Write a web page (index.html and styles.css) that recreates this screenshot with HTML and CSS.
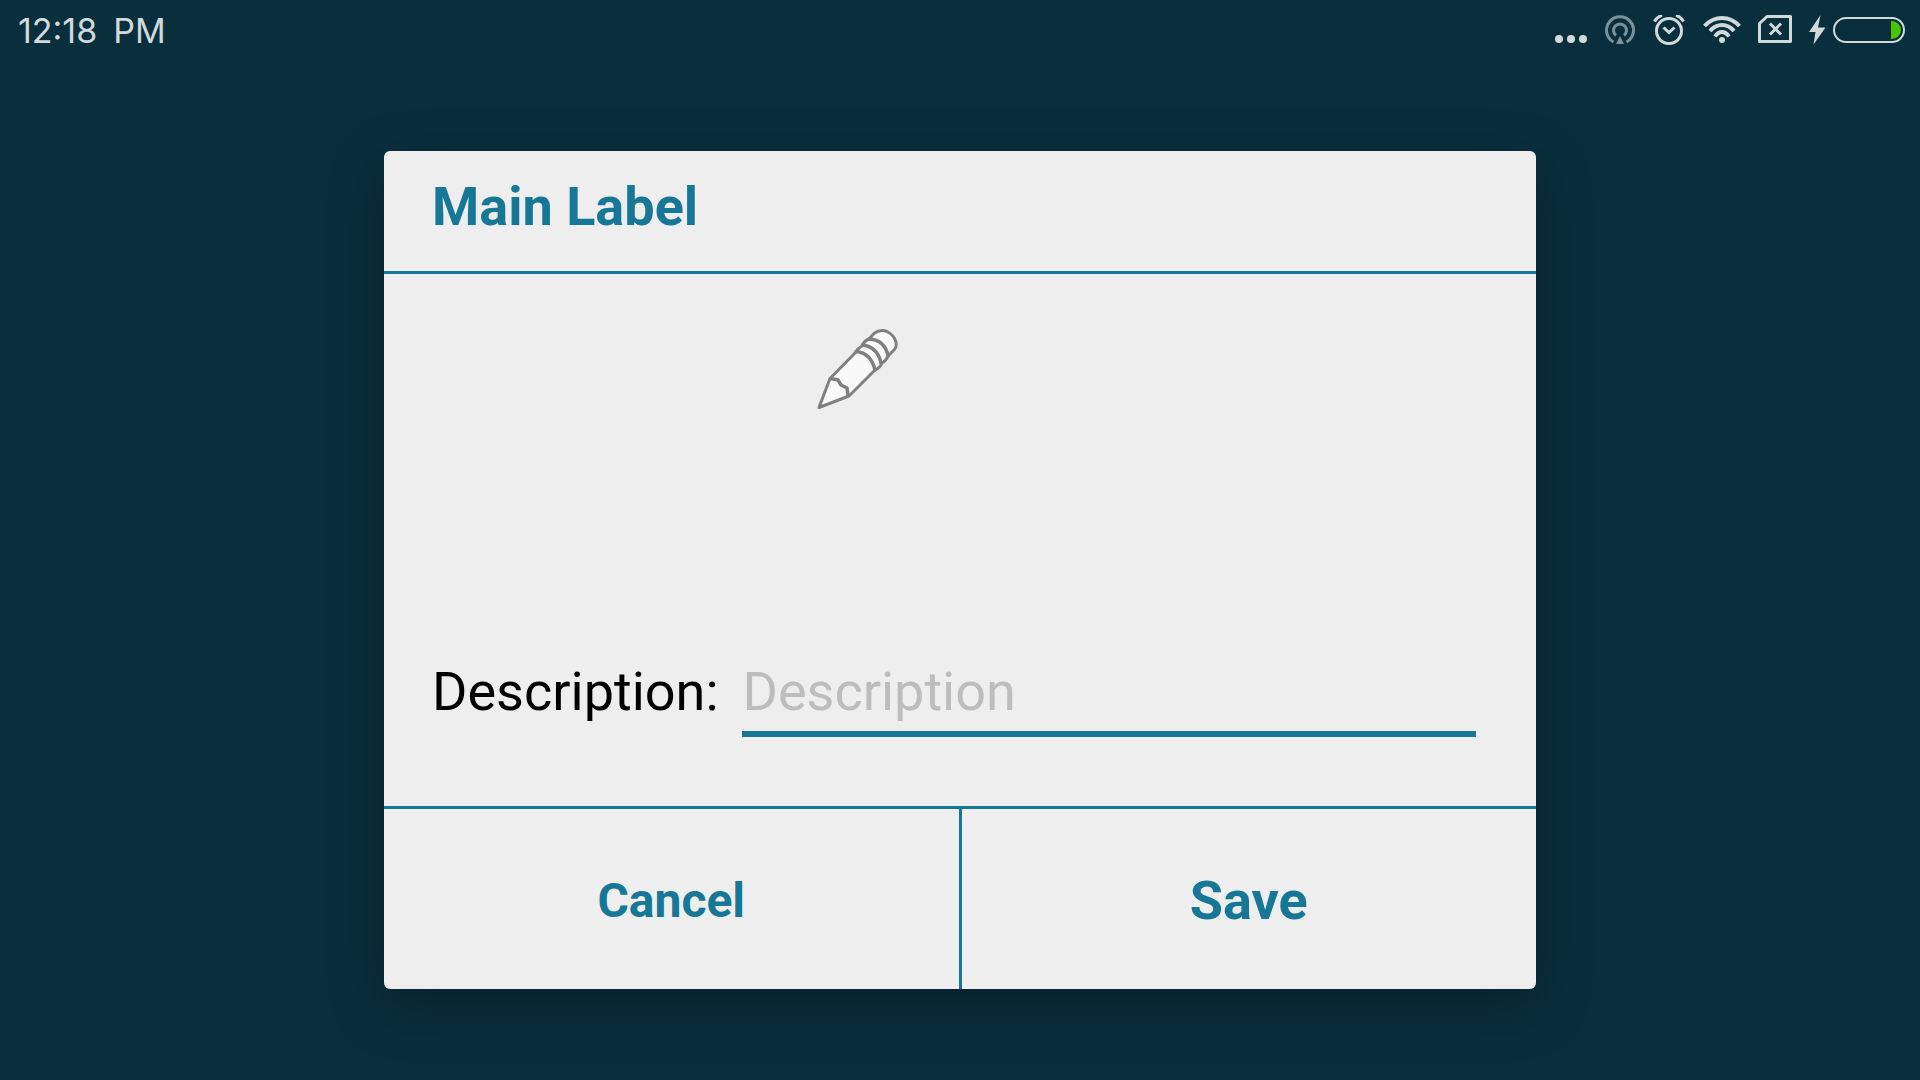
FILE: index.html
```html
<!DOCTYPE html>
<html lang="en">
<head>
<meta charset="utf-8">
<meta name="viewport" content="width=device-width, initial-scale=1">
<title>Main Label</title>
<link rel="stylesheet" href="styles.css">
</head>
<body>
<header class="status-bar">
  <div class="clock"><span>12:18</span><span>PM</span></div>
  <div class="indicators">
    <svg width="33" height="30" viewBox="0 0 33 30" fill="currentColor" aria-hidden="true">
      <circle cx="4" cy="24" r="4"/><circle cx="16" cy="24" r="4"/><circle cx="28" cy="24" r="4"/>
    </svg>
    <svg class="dim" width="31" height="30" viewBox="0 0 31 30" fill="none" stroke="currentColor" stroke-width="3" aria-hidden="true">
      <path d="M8.500 27A13.500 13.500 0 1 1 21.500 27"/>
      <path d="M11 20.500A6.500 6.500 0 1 1 19 20.500"/>
      <path d="M15 21l4 8h-8z" fill="currentColor" stroke="none"/>
    </svg>
    <svg width="33" height="30" viewBox="0 0 33 30" fill="none" stroke="currentColor" stroke-width="3" aria-hidden="true">
      <circle cx="16" cy="16" r="12.500"/>
      <path d="M10.500 12.500l5.500 5 5.500-5" stroke-width="3"/>
      <path d="M1.500 6.500Q4 2 9 0M30.500 6.500Q28 2 23 0"/>
    </svg>
    <svg width="38" height="30" viewBox="0 0 38 30" fill="none" stroke="currentColor" stroke-width="4" aria-hidden="true">
      <path d="M1.500 11Q9 3 19 3t17.500 8M7 16Q12 10 19 10t12 6M12 21.500Q15 17 19 17t7 4.500"/>
      <circle cx="19" cy="25" r="3" fill="currentColor" stroke="none"/>
    </svg>
    <svg width="34" height="30" viewBox="0 0 34 30" fill="none" stroke="currentColor" stroke-width="3" aria-hidden="true">
      <path d="M9 1.500H32.500V26.500H1.500V8.500z" stroke-linejoin="round"/>
      <path d="M12 8.500l11 11M23 8.500l-11 11" stroke-width="3"/>
    </svg>
    <div class="power">
      <svg width="16" height="30" viewBox="0 0 16 30" fill="currentColor" aria-hidden="true"><path d="M11.500 0L0 17h6.500L4.500 29.500 16.500 12.500H9z"/></svg>
      <svg width="72" height="30" viewBox="0 0 72 30" aria-hidden="true">
        <rect x="1" y="3" width="70" height="24" rx="12" fill="none" stroke="currentColor" stroke-width="2"/>
        <path d="M58 6h1a9 9 0 0 1 0 18h-1z" fill="#4bc400"/>
      </svg>
    </div>
  </div>
</header>
<main class="stage">
  <form class="dialog" role="dialog" aria-labelledby="dialog-title">
    <h1 class="title" id="dialog-title">Main Label</h1>
    <div class="content">
      <div class="picture">
        <svg width="84" height="84" viewBox="16 18 84 84" fill="#f9f9f9" stroke="#808080" stroke-width="3" stroke-linejoin="round" stroke-linecap="round" aria-hidden="true">
          <path d="M19 97.500L30 68.500 33 65.500 56 42Q58 38 62 36 64 31 69 29L74 23.500Q80 19 87 21.500 94 25 96 32 97 37 94 40L88 46Q86 51 82 53 80 58 75 60L53 82 49 86z"/>
          <path d="M56 41.500Q71 43 75 60M62.500 35Q78 37 81 53.500M69 29Q85 30 88 46" fill="none" stroke-width="3.500"/>
          <path d="M31 68.500L38 70 41 75 47 78 48 85" fill="none" stroke-width="3.500"/>
        </svg>
      </div>
      <div class="field">
        <label class="field-label" for="description">Description:</label>
        <input class="field-input" id="description" type="text" placeholder="Description">
      </div>
    </div>
    <div class="actions">
      <button class="action action-cancel" type="button">Cancel</button>
      <button class="action action-save" type="submit">Save</button>
    </div>
  </form>
</main>
</body>
</html>
```
FILE: styles.css
```css
* {
  box-sizing: border-box;
}

body {
  margin: 0;
  min-height: 100vh;
  display: flex;
  flex-direction: column;
  background: #092f3d;
  font-family: Roboto, "Liberation Sans", sans-serif;
}

.status-bar {
  display: flex;
  justify-content: space-between;
  align-items: center;
  height: 60px;
  padding: 0 15px 0 18px;
  color: #d0d9dc;
}

.clock {
  display: flex;
  gap: 16px;
  padding-top: 2px;
  font: 400 34px/40px Inter, sans-serif;
}

.indicators {
  display: flex;
  align-items: center;
  gap: 17px;
}

.indicators svg {
  display: block;
}

.dim {
  color: #7b9199;
}

.power {
  display: flex;
  gap: 8px;
}

.stage {
  flex: 1;
  display: flex;
  align-items: center;
  justify-content: center;
}

.dialog {
  width: 60%;
  background: #eee;
  border-radius: 6px;
  box-shadow: 0 16px 56px rgba(0, 0, 0, 0.32);
  overflow: hidden;
}

.title {
  margin: 0;
  padding: 26px 48px 34px;
  border-bottom: 3px solid #177797;
  color: #177797;
  font-size: 54px;
  line-height: 60px;
  font-weight: 700;
}

.content {
  padding: 54px 60px 69px 48px;
}

.picture {
  padding-left: 384px;
  min-height: 325px;
}

.picture svg {
  display: block;
}

.field {
  display: flex;
  align-items: flex-start;
  gap: 24px;
  font-size: 54px;
  line-height: 78px;
}

.field-label {
  color: #000;
}

.field-input {
  flex: 1;
  min-width: 0;
  height: 84px;
  padding: 0 0 2px;
  border: 0;
  border-bottom: 6px solid #177797;
  border-radius: 0;
  background: transparent;
  color: #000;
  font: inherit;
  line-height: 76px;
  outline: none;
}

.field-input::placeholder {
  color: #bdbdbd;
  opacity: 1;
}

.actions {
  display: flex;
  border-top: 3px solid #177797;
}

.action {
  flex: 1;
  height: 180px;
  padding: 2px 0 0;
  border: 0;
  background: transparent;
  color: #177797;
  font-family: inherit;
  font-weight: 700;
}

.action-cancel {
  font-size: 48px;
}

.action-save {
  border-left: 3px solid #177797;
  font-size: 54px;
}
```
